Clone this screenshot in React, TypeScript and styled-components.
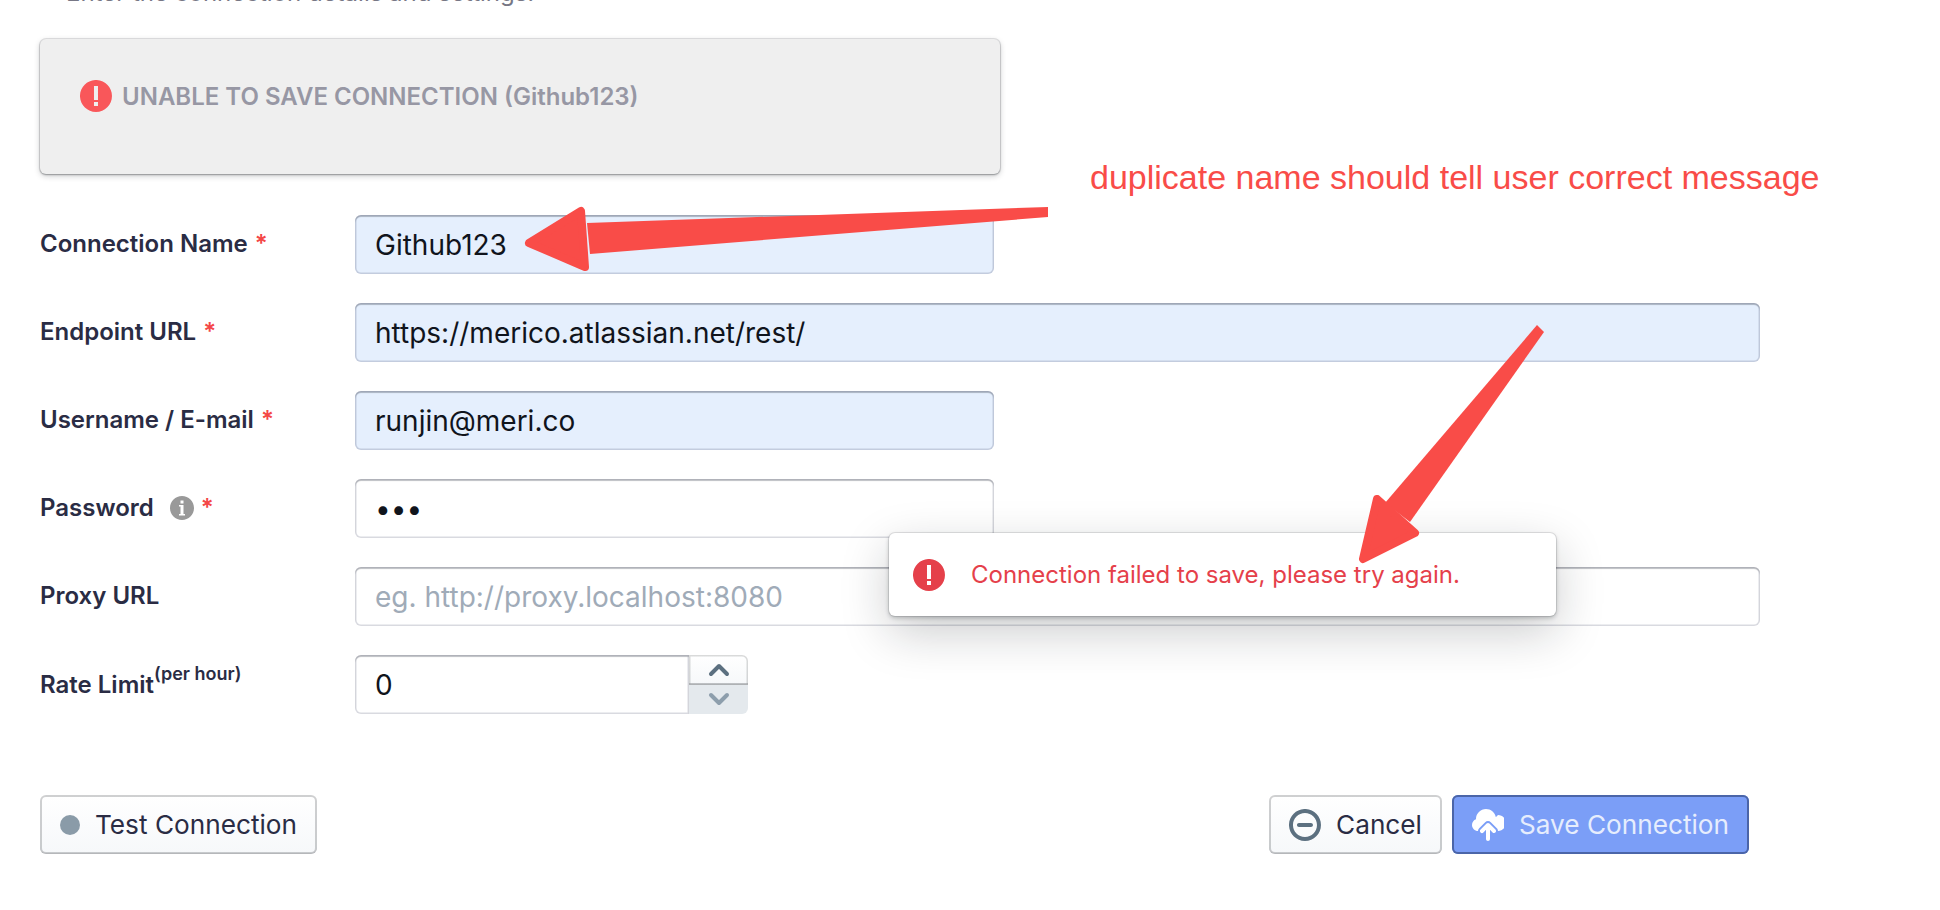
import React from "react";
import styled, { createGlobalStyle } from "styled-components";

const Global = createGlobalStyle`
  html, body { margin: 0; padding: 0; background: #fff; }
  body { font-family: Inter, "Noto Sans", sans-serif; overflow: hidden; }
  * { box-sizing: border-box; }
`;

const Page = styled.div`
  position: relative;
  width: 1940px;
  height: 910px;
  overflow: hidden;
  padding-left: 40px;
`;

const Subtitle = styled.div`
  height: 24px;
  margin-top: -19px;
  padding-left: 26px;
  font-size: 24px;
  line-height: 24px;
  color: #777785;
`;

const AlertCard = styled.div`
  display: flex;
  align-items: flex-start;
  gap: 10px;
  width: 960px;
  height: 135px;
  margin-top: 34px;
  padding: 41px 40px;
  background: #efefef;
  border-radius: 6px;
  box-shadow: 0 0 0 1px rgba(16, 22, 26, 0.1), 0 1px 2px rgba(16, 22, 26, 0.3), 0 2px 6px rgba(16, 22, 26, 0.2);
`;

const AlertText = styled.span`
  margin-top: 1px;
  font-size: 24px;
  line-height: 32px;
  font-weight: 600;
  color: #9797a4;
`;

const Form = styled.div`
  display: grid;
  grid-template-columns: 315px 1fr;
  row-gap: 29px;
  margin-top: 41px;
`;

const Label = styled.label`
  display: flex;
  align-items: center;
  height: 59px;
  padding-bottom: 2px;
  font-size: 24px;
  font-weight: 600;
  color: #2a2c44;
`;

const Req = styled.span`
  color: #f44747;
  margin-left: 7px;
  font-size: 24px;
`;

const Sup = styled.sup`
  font-size: 18px;
  line-height: 1;
  position: relative;
  top: -4px;
  vertical-align: super;
`;

const InfoWrap = styled.span`
  display: inline-flex;
  margin-left: 16px;
  color: #999;
`;

const Field = styled.div`
  display: flex;
  height: 59px;
`;

const Input = styled.input<{ $w: number; $filled?: boolean }>`
  width: ${(p) => p.$w}px;
  height: 59px;
  padding: 0 20px;
  border: 0;
  outline: 0;
  border-radius: 6px;
  font-family: inherit;
  font-size: 28px;
  color: #10141c;
  background: ${(p) => (p.$filled ? "#e5effd" : "#fff")};
  box-shadow: inset 0 0 0 1.5px rgba(16, 22, 60, 0.16), inset 0 2px 1px rgba(16, 22, 26, 0.2);
  &::placeholder { color: #a0abb8; opacity: 1; }
`;

const StepInput = styled(Input)`
  border-radius: 6px 0 0 6px;
`;

const Stepper = styled.div`
  display: flex;
  flex-direction: column;
  width: 59px;
  height: 59px;
`;

const StepButton = styled.div<{ $up?: boolean }>`
  flex: 1;
  display: flex;
  align-items: center;
  justify-content: center;
  background: ${(p) => (p.$up ? "linear-gradient(#fff, #f6f8fa)" : "#e4e9ed")};
  border-radius: ${(p) => (p.$up ? "0 6px 0 0" : "0 0 6px 0")};
  box-shadow: ${(p) => (p.$up ? "inset 0 0 0 1.5px rgba(16,22,26,.16), inset 0 -2px 0 rgba(16,22,26,.18)" : "none")};
`;

const Footer = styled.div`
  display: flex;
  justify-content: space-between;
  width: 1709px;
  margin-top: 81px;
`;

const ButtonGroup = styled.div`
  display: flex;
  gap: 10px;
`;

const Button = styled.div<{ $primary?: boolean }>`
  display: flex;
  align-items: center;
  gap: 15px;
  height: 59px;
  padding: 0 20px;
  border-radius: 6px;
  font-size: 26.2px;
  color: ${(p) => (p.$primary ? "#e6edfd" : "#2a2c44")};
  background: ${(p) => (p.$primary ? "#7b9ef7" : "linear-gradient(#fff, #f6f8fa)")};
  box-shadow: ${(p) =>
    p.$primary
      ? "inset 0 0 0 2px #4b65a8"
      : "inset 0 0 0 2px rgba(16,22,26,.2), inset 0 -1px 0 rgba(16,22,26,.1)"};
`;

const Dot = styled.span`
  width: 20px;
  height: 20px;
  border-radius: 50%;
  background: #8a9ba8;
`;

const Toast = styled.div`
  position: absolute;
  left: 889px;
  top: 533px;
  display: flex;
  align-items: center;
  gap: 26px;
  width: 667px;
  height: 83px;
  padding: 0 24px;
  background: #fff;
  border-radius: 6px;
  box-shadow: 0 0 0 1px rgba(16, 22, 26, 0.1), 0 2px 4px rgba(16, 22, 26, 0.25), 0 16px 48px rgba(16, 22, 26, 0.22);
`;

const ToastText = styled.span`
  font-size: 24px;
  color: #e5404a;
`;

const Annotation = styled.div`
  position: absolute;
  left: 1090px;
  top: 157px;
  font-family: "Liberation Sans", Arial, sans-serif;
  font-size: 34px;
  line-height: 40px;
  color: #f94c48;
  white-space: nowrap;
`;

const ArrowLayer = styled.svg`
  position: absolute;
  left: 0;
  top: 0;
  width: 1940px;
  height: 910px;
  pointer-events: none;
`;

const PATHS = {
  error: "M7.99-.01c-4.42 0-8 3.58-8 8s3.58 8 8 8 8-3.58 8-8-3.58-8-8-8zm1 13h-2v-2h2v2zm0-3h-2v-7h2v7z",
  info: "M8 0C3.58 0 0 3.58 0 8s3.58 8 8 8 8-3.58 8-8-3.58-8-8-8zM7 3h2v2H7V3zm3 10H6v-1h1V7H6V6h3v6h1v1z",
  remove: "M10.99 6.99h-6c-.55 0-1 .45-1 1s.45 1 1 1h6c.55 0 1-.45 1-1s-.45-1-1-1zm-3-7c-4.42 0-8 3.58-8 8s3.58 8 8 8 8-3.58 8-8-3.58-8-8-8zm0 14c-3.31 0-6-2.69-6-6s2.69-6 6-6 6 2.69 6 6-2.69 6-6 6z",
  upload: "M8.71 7.29C8.53 7.11 8.28 7 8 7s-.53.11-.71.29l-3 3a1.003 1.003 0 001.42 1.42L7 10.41V15c0 .55.45 1 1 1s1-.45 1-1v-4.59l1.29 1.29c.18.19.43.3.71.3a1.003 1.003 0 00.71-1.71l-3-3zM12 4c-.03 0-.07 0-.1.01C11.44 1.72 9.42 0 7 0 4.24 0 2 2.24 2 5v.17C.83 5.58 0 6.7 0 8c0 1.66 1.34 3 3 3 0-.55.22-1.05.59-1.41l3-3c.36-.37.86-.59 1.41-.59.55 0 1.05.22 1.41.59l3 3c.37.36.59.86.59 1.41 2.21 0 4-1.79 4-4s-1.79-4-4-4z",
};

function Icon({ name, size, color }: { name: keyof typeof PATHS; size: number; color: string }) {
  return (
    <svg width={size} height={size} viewBox="0 0 16 16" fill={color} style={{ flex: "none" }}>
      <path fillRule="evenodd" d={PATHS[name]} />
    </svg>
  );
}

function Chevron({ up, color }: { up?: boolean; color: string }) {
  return (
    <svg width="22" height="14" viewBox="0 0 22 14" fill="none">
      <polyline
        points={up ? "3,11 11,3 19,11" : "3,3 11,11 19,3"}
        stroke={color}
        strokeWidth="4"
        strokeLinecap="round"
        strokeLinejoin="round"
      />
    </svg>
  );
}

export default function App() {
  return (
    <Page>
      <Global />
      <Subtitle>Enter the connection details and settings.</Subtitle>
      <AlertCard>
        <Icon name="error" size={32} color="#f9575a" />
        <AlertText>UNABLE TO SAVE CONNECTION (Github123)</AlertText>
      </AlertCard>

      <Form>
        <Label>Connection Name<Req>*</Req></Label>
        <Field><Input $w={639} $filled readOnly value="Github123" /></Field>

        <Label>Endpoint URL<Req>*</Req></Label>
        <Field><Input $w={1405} $filled readOnly value="https://merico.atlassian.net/rest/" /></Field>

        <Label>Username / E-mail<Req>*</Req></Label>
        <Field><Input $w={639} $filled readOnly value="runjin@meri.co" /></Field>

        <Label>Password<InfoWrap><Icon name="info" size={24} color="#999" /></InfoWrap><Req>*</Req></Label>
        <Field><Input $w={639} type="password" readOnly value="abc" /></Field>

        <Label>Proxy URL</Label>
        <Field><Input $w={1405} readOnly placeholder="eg. http://proxy.localhost:8080" /></Field>

        <Label><span>Rate Limit<Sup>(per hour)</Sup></span></Label>
        <Field>
          <StepInput $w={334} readOnly value="0" />
          <Stepper>
            <StepButton $up><Chevron up color="#5c7080" /></StepButton>
            <StepButton><Chevron color="#8d9eac" /></StepButton>
          </Stepper>
        </Field>
      </Form>

      <Footer>
        <Button><Dot />Test Connection</Button>
        <ButtonGroup>
          <Button><Icon name="remove" size={32} color="#5c7080" />Cancel</Button>
          <Button $primary><Icon name="upload" size={32} color="#fff" />Save Connection</Button>
        </ButtonGroup>
      </Footer>

      <Toast>
        <Icon name="error" size={32} color="#e5404a" />
        <ToastText>Connection failed to save, please try again.</ToastText>
      </Toast>

      <Annotation>duplicate name should tell user correct message</Annotation>

      <ArrowLayer viewBox="0 0 1940 910">
        <g fill="#f94c48" stroke="none">
          <polygon points="1048,207 1048,217 590,254 587,223" />
          <polygon points="529,243 581,211 585,267" stroke="#f94c48" strokeWidth="8" strokeLinejoin="round" />
          <polygon points="1537,325 1544,332 1410,522 1385,503" />
          <polygon points="1377,499 1415,533 1363,559" stroke="#f94c48" strokeWidth="8" strokeLinejoin="round" />
        </g>
      </ArrowLayer>
    </Page>
  );
}
